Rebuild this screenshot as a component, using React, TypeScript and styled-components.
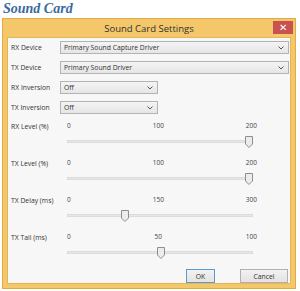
import styled, { createGlobalStyle } from "styled-components";

const GlobalStyle = createGlobalStyle`
  html, body {
    margin: 0;
    padding: 0;
    background: #ffffff;
  }
  body {
    width: 300px;
    height: 291px;
    overflow: hidden;
    font-family: "Open Sans", "Noto Sans", sans-serif;
  }
`;

const Page = styled.div`
  width: 300px;
  height: 291px;
  display: flex;
  flex-direction: column;
`;

const Heading = styled.h2`
  margin: 0;
  padding: 1px 0 0 3px;
  height: 16px;
  font-family: "Liberation Serif", serif;
  font-style: italic;
  font-weight: bold;
  font-size: 14px;
  line-height: 16px;
  color: #3a6a9e;
`;

const Window = styled.div`
  margin: 1px 0 0 2px;
  width: 294px;
  height: 271px;
  box-sizing: border-box;
  background: #f4c76b;
  border: 1px solid #e0ab45;
  padding: 0 4px 4px 4px;
  display: flex;
  flex-direction: column;
`;

const TitleBar = styled.div`
  height: 20px;
  display: grid;
  grid-template-columns: 1fr auto 1fr;
  align-items: center;
`;

const Title = styled.div`
  grid-column: 2;
  font-size: 9.5px;
  color: #333333;
`;

const CloseButton = styled.div`
  grid-column: 3;
  justify-self: end;
  align-self: start;
  margin-top: 2px;
  margin-right: -2px;
  width: 20px;
  height: 13px;
  background: #c9514f;
  color: #ffffff;
  font-size: 10px;
  line-height: 13px;
  text-align: center;
`;

const Client = styled.div`
  flex: 1;
  background: #f7f7f7;
  border: 1px solid #e3b658;
  padding: 3px 0 0 3px;
  display: flex;
  flex-direction: column;
`;

const Row = styled.div<{ $gap?: number }>`
  display: grid;
  grid-template-columns: 49px 1fr;
  align-items: center;
  margin-bottom: ${(p) => p.$gap ?? 7}px;
`;

const Label = styled.div`
  font-size: 6.8px;
  color: #333333;
  white-space: nowrap;
`;

const Select = styled.div<{ $width: number }>`
  width: ${(p) => p.$width}px;
  height: 13px;
  box-sizing: border-box;
  border: 1px solid #b3b3b3;
  background: linear-gradient(#f4f4f4, #e6e6e6);
  display: flex;
  align-items: center;
  justify-content: space-between;
  padding: 0 4px 0 3px;
  font-size: 6.8px;
  color: #333333;
`;

const Level = styled.div`
  display: flex;
  flex-direction: column;
  margin-bottom: 7px;
`;

const Scale = styled.div`
  height: 10px;
  display: flex;
  justify-content: space-between;
  width: 190px;
  margin-left: 7px;
  font-size: 6.5px;
  color: #444444;
`;

const SliderRow = styled.div`
  height: 20px;
  display: flex;
  align-items: center;
  padding-left: 56px;
`;

const Track = styled.div`
  position: relative;
  width: 186px;
  height: 3px;
  background: #e7e7e7;
  border: 1px solid #dcdcdc;
  box-sizing: border-box;
`;

const Thumb = styled.svg`
  position: absolute;
  top: -5px;
  width: 8px;
  height: 12px;
  margin-left: -4px;
`;

const Buttons = styled.div`
  display: flex;
  justify-content: flex-end;
  gap: 25px;
  padding-right: 2px;
`;

const Button = styled.div<{ $default?: boolean; $width: number }>`
  width: ${(p) => p.$width}px;
  height: 14px;
  box-sizing: border-box;
  border: 1px solid ${(p) => (p.$default ? "#5b9bd0" : "#b0b0b0")};
  background: linear-gradient(#f2f2f2, #e3e3e3);
  font-size: 6.8px;
  color: #333333;
  display: flex;
  align-items: center;
  justify-content: center;
`;

const Chevron = () => (
  <svg width="6" height="4" viewBox="0 0 6 4">
    <path d="M0.5 0.5 L3 3 L5.5 0.5" fill="none" stroke="#555" strokeWidth="1" />
  </svg>
);

const levels = [
  { label: "RX Level (%)", scale: ["0", "100", "200"], value: 1 },
  { label: "TX Level (%)", scale: ["0", "100", "200"], value: 1 },
  { label: "TX Delay (ms)", scale: ["0", "150", "300"], value: 0.3 },
  { label: "TX Tail (ms)", scale: ["0", "50", "100"], value: 0.5 },
];

function App() {
  return (
    <Page>
      <GlobalStyle />
      <Heading>Sound Card</Heading>
      <Window>
        <TitleBar>
          <Title>Sound Card Settings</Title>
          <CloseButton>✕</CloseButton>
        </TitleBar>
        <Client>
          <Row>
            <Label>RX Device</Label>
            <Select $width={229}>
              Primary Sound Capture Driver
              <Chevron />
            </Select>
          </Row>
          <Row>
            <Label>TX Device</Label>
            <Select $width={229}>
              Primary Sound Driver
              <Chevron />
            </Select>
          </Row>
          <Row>
            <Label>RX Inversion</Label>
            <Select $width={98}>
              Off
              <Chevron />
            </Select>
          </Row>
          <Row>
            <Label>TX Inversion</Label>
            <Select $width={98}>
              Off
              <Chevron />
            </Select>
          </Row>
          {levels.map((l) => (
            <Level key={l.label}>
              <Row $gap={0}>
                <Label>{l.label}</Label>
                <Scale>
                  {l.scale.map((s) => (
                    <span key={s}>{s}</span>
                  ))}
                </Scale>
              </Row>
              <SliderRow>
                <Track>
                  <Thumb
                    viewBox="0 0 8 12"
                    style={{ left: `${4 + l.value * 177}px` }}
                  >
                    <path
                      d="M0.5 0.5 H7.5 V8 L4 11.5 L0.5 8 Z"
                      fill="#ececec"
                      stroke="#8e8e8e"
                      strokeWidth="1"
                    />
                  </Thumb>
                </Track>
              </SliderRow>
            </Level>
          ))}
          <Buttons>
            <Button $default $width={29}>
              OK
            </Button>
            <Button $width={48}>Cancel</Button>
          </Buttons>
        </Client>
      </Window>
    </Page>
  );
}

export default App;
